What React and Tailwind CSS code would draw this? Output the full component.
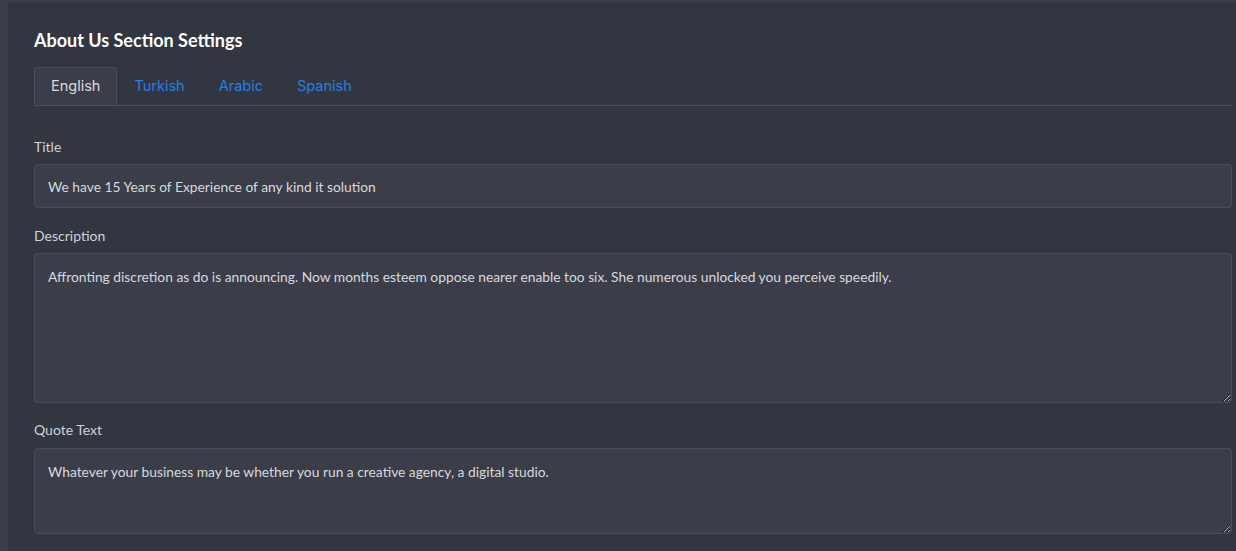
import { useState } from "react";

const tabs = ["English", "Turkish", "Arabic", "Spanish"];

const AboutSettings = () => {
  const [active, setActive] = useState("English");

  return (
    <div className="min-h-screen w-full bg-[#313641] flex" style={{ fontFamily: "Lato, 'Noto Sans', sans-serif" }}>
      {/* left strip */}
      <div className="w-[8px] shrink-0 bg-[#3a3e48]"></div>

      <div className="flex-1 border-t-2 border-[#3a3e48] pl-[26px] pr-[4px] pt-[25px] pb-4">
        <h1 className="text-[18px] leading-[27px] font-bold text-white">About Us Section Settings</h1>

        {/* Tabs */}
        <div className="mt-[13px] flex border-b border-[#4a4e5a]" style={{ fontFamily: "Inter, 'Open Sans', sans-serif" }}>
          {tabs.map((t) => (
            <button
              key={t}
              onClick={() => setActive(t)}
              className={
                active === t
                  ? "h-[38px] -mb-px px-[16px] text-[14.5px] rounded-t-[4px] border border-b-[#3b3e49] border-[#4a4e5a] bg-[#3b3e49] text-[#d7d9dd]"
                  : "h-[38px] px-[16px] text-[14.5px] border border-transparent text-[#2a7de1]"
              }
            >
              {t}
            </button>
          ))}
        </div>

        {/* Title */}
        <label className="block mt-[30px] mb-[7px] text-[14px] leading-[21px] text-[#cfd2d6]">Title</label>
        <input
          type="text"
          defaultValue="We have 15 Years of Experience of any kind it solution"
          className="w-full h-[44px] px-[13px] text-[13.8px] rounded-[4px] border border-[#4a4d59] bg-[#3b3e49] text-[#d7d9dd] focus:outline-none"
        />

        {/* Description */}
        <label className="block mt-[17px] mb-[7px] text-[14px] leading-[21px] text-[#cfd2d6]">Description</label>
        <textarea
          defaultValue="Affronting discretion as do is announcing. Now months esteem oppose nearer enable too six. She numerous unlocked you perceive speedily."
          className="block w-full h-[150px] px-[13px] pt-[12px] text-[13.8px] leading-[21px] rounded-[4px] border border-[#4a4d59] bg-[#3b3e49] text-[#d7d9dd] resize-y focus:outline-none [color-scheme:dark]"
        />

        {/* Quote */}
        <label className="block mt-[16px] mb-[8px] text-[14px] leading-[21px] text-[#cfd2d6]">Quote Text</label>
        <textarea
          defaultValue="Whatever your business may be whether you run a creative agency, a digital studio."
          className="block w-full h-[86px] px-[13px] pt-[12px] text-[13.8px] leading-[21px] rounded-[4px] border border-[#4a4d59] bg-[#3b3e49] text-[#d7d9dd] resize-y focus:outline-none [color-scheme:dark]"
        />
      </div>
    </div>
  );
};

export default AboutSettings;
